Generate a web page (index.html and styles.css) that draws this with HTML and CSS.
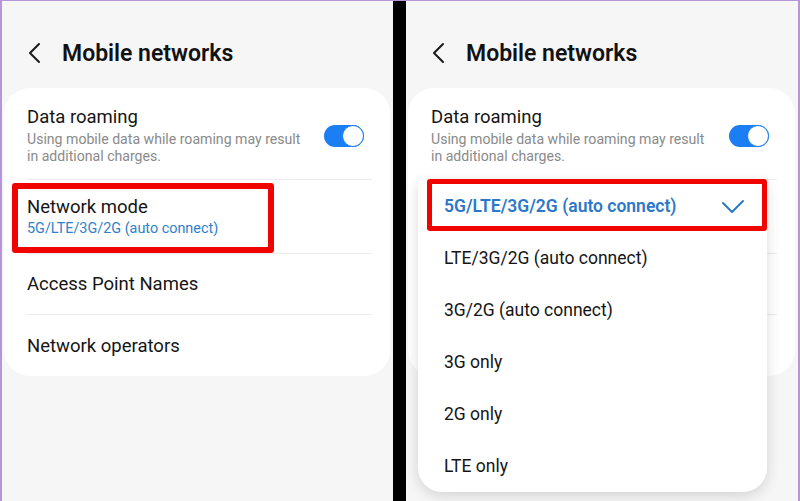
FILE: index.html
```html
<!DOCTYPE html>
<html lang="en">
<head>
  <meta charset="UTF-8" />
  <meta name="viewport" content="width=device-width, initial-scale=1.0"/>
  <title>Mobile networks</title>
  <link rel="stylesheet" href="styles.css">
</head>
<body>
  <div class="frame">

    <!-- left: settings list -->
    <section class="screen">
      <header class="appbar">
        <svg class="back" width="14" height="22" viewBox="0 0 14 22">
          <polyline points="11,2 2,11 11,20" fill="none" stroke="#1a1a1a" stroke-width="2" stroke-linecap="round" stroke-linejoin="round"/>
        </svg>
        <h1>Mobile networks</h1>
      </header>

      <div class="card">
        <div class="row row-switch">
          <div class="texts">
            <div class="title">Data roaming</div>
            <div class="sub">Using mobile data while roaming may result in additional charges.</div>
          </div>
          <span class="switch"><span class="knob"></span></span>
        </div>
        <div class="row row-mode">
          <div class="texts">
            <div class="title">Network mode</div>
            <div class="sub value">5G/LTE/3G/2G (auto connect)</div>
          </div>
          <span class="mark mark-left"></span>
        </div>
        <div class="row row-plain">
          <div class="title">Access Point Names</div>
        </div>
        <div class="row row-plain">
          <div class="title">Network operators</div>
        </div>
      </div>
    </section>

    <div class="gutter"></div>

    <!-- right: network mode picker open -->
    <section class="screen">
      <header class="appbar">
        <svg class="back" width="14" height="22" viewBox="0 0 14 22">
          <polyline points="11,2 2,11 11,20" fill="none" stroke="#1a1a1a" stroke-width="2" stroke-linecap="round" stroke-linejoin="round"/>
        </svg>
        <h1>Mobile networks</h1>
      </header>

      <div class="card">
        <div class="row row-switch">
          <div class="texts">
            <div class="title">Data roaming</div>
            <div class="sub">Using mobile data while roaming may result in additional charges.</div>
          </div>
          <span class="switch"><span class="knob"></span></span>
        </div>
        <!-- rows hidden under the open picker -->
        <div class="row row-mode"></div>
        <div class="row row-plain"></div>
        <div class="row row-plain"></div>
      </div>

      <ul class="menu">
        <li class="selected">
          <span>5G/LTE/3G/2G (auto connect)</span>
          <svg width="24" height="16" viewBox="0 0 24 16">
            <polyline points="2,5 11,14 22,3" fill="none" stroke="#2c78c8" stroke-width="2" stroke-linecap="round" stroke-linejoin="round"/>
          </svg>
          <span class="mark mark-right"></span>
        </li>
        <li>LTE/3G/2G (auto connect)</li>
        <li>3G/2G (auto connect)</li>
        <li>3G only</li>
        <li>2G only</li>
        <li>LTE only</li>
      </ul>
    </section>

  </div>
</body>
</html>
```

FILE: styles.css
```css
html, body {
  margin: 0;
  padding: 0;
}
body {
  font-family: Roboto, "Noto Sans", Arial, sans-serif;
  color: #151515;
  background: #f6f6f6;
}
.frame {
  display: grid;
  grid-template-columns: 391px 13px 1fr;
  height: 501px;
  box-sizing: border-box;
  border-left: 2px solid #b894d8;
  border-right: 2px solid #b894d8;
  border-top: 1px solid #b894d8;
  overflow: hidden;
}
.gutter {
  background: #000;
}
.screen {
  position: relative;
  background: #f6f6f6;
  padding: 0 3px 0 2px;
}
.appbar {
  display: flex;
  align-items: center;
  height: 87px;
  padding: 17px 0 0 24px;
  box-sizing: border-box;
}
.back {
  display: block;
}
.appbar h1 {
  margin: 0 0 0 20px;
  font-size: 23px;
  font-weight: 600;
  color: #121212;
}
.card {
  background: #fff;
  border-radius: 26px;
  padding: 0 18px 0 23px;
}
.row {
  position: relative;
  display: flex;
  align-items: center;
  border-bottom: 1px solid #ececec;
}
.row:last-child {
  border-bottom: none;
}
.row .title {
  font-size: 18.5px;
  line-height: 22px;
}
.row-switch {
  height: 92px;
  box-sizing: border-box;
  padding-top: 4px;
}
.row-switch .texts {
  flex: 1;
  padding-right: 20px;
}
.sub {
  font-size: 14.1px;
  line-height: 17px;
  color: #8a8a8a;
  margin-top: 3px;
}
.sub.value {
  font-size: 14.4px;
  color: #2f7fca;
  margin-top: 2px;
}
.row-mode {
  height: 74px;
  box-sizing: border-box;
}
.row-plain {
  height: 61px;
  box-sizing: border-box;
}
.switch {
  position: relative;
  width: 40px;
  height: 22px;
  border-radius: 11px;
  background: #1b7ef3;
  margin-right: 8px;
  flex: none;
}
.knob {
  position: absolute;
  right: 0;
  top: 0;
  width: 20px;
  height: 20px;
  border-radius: 50%;
  background: #fff;
  border: 1px solid #1b7ef3;
}

/* red annotation boxes */
.mark {
  position: absolute;
  border: 6px solid #f00400;
  border-radius: 3px;
  box-sizing: border-box;
  pointer-events: none;
}
.mark-left {
  left: -15px;
  top: 3px;
  width: 262px;
  height: 70px;
}
.mark-right {
  left: 9px;
  top: -1px;
  right: 0;
  height: 52px;
  border-width: 5px;
}

/* dropdown */
.menu {
  position: absolute;
  left: 12px;
  top: 179px;
  width: 349px;
  margin: 0;
  padding: 0;
  list-style: none;
  background: #fff;
  border-radius: 0 0 24px 24px;
  box-shadow: 0 4px 14px rgba(0,0,0,0.14);
}
.menu li {
  position: relative;
  display: flex;
  align-items: center;
  justify-content: space-between;
  height: 52px;
  padding: 0 22px 0 26px;
  font-size: 17.5px;
  color: #151515;
}
.menu li.selected {
  color: #2c78c8;
  font-weight: 600;
}
```
